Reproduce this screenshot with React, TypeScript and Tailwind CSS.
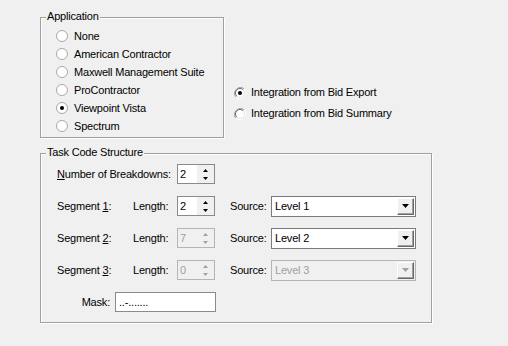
import { FC, ReactNode } from "react";

const Radio: FC<{ checked?: boolean; classic?: boolean }> = ({ checked, classic }) => (
    <svg width="12" height="12" viewBox="0 0 12 12" className="shrink-0">
        {classic ? (
            <>
                <path d="M10.2 1.8 A6 6 0 0 0 1.8 10.2" fill="none" stroke="#a0a0a0" strokeWidth="1" />
                <path d="M1.8 10.2 A6 6 0 0 0 10.2 1.8" fill="none" stroke="#ffffff" strokeWidth="1" />
                <circle cx="6" cy="6" r="4.5" fill="#fff" />
                <path d="M9.2 2.8 A4.5 4.5 0 0 0 2.8 9.2" fill="none" stroke="#696969" strokeWidth="1" />
                <path d="M2.8 9.2 A4.5 4.5 0 0 0 9.2 2.8" fill="none" stroke="#e3e3e3" strokeWidth="1" />
            </>
        ) : (
            <circle cx="6" cy="6" r="5.5" fill="#fff" stroke="#a8a8a8" strokeWidth="1" />
        )}
        {checked && <circle cx="6" cy="6" r="2" fill="#000" />}
    </svg>
);

const GroupBox: FC<{ title: string; className: string; children: ReactNode }> = ({
    title,
    className,
    children,
}) => (
    <div
        className={`relative border border-[#a0a0a0] shadow-[inset_1px_1px_0_#fff,1px_1px_0_#fff] ${className}`}
    >
        <span className="absolute left-[5px] top-[-8px] bg-[#f0f0f0] px-px leading-[13px]">{title}</span>
        {children}
    </div>
);

const Spinner: FC<{ value: string; disabled?: boolean }> = ({ value, disabled }) => (
    <div
        className={`flex h-[20px] w-[38px] border ${
            disabled ? "border-[#b5b5b5] bg-[#f0f0f0] text-[#a0a0a0]" : "border-[#8a8a8a] bg-white text-black"
        }`}
    >
        <span className="flex-1 pl-[2px] leading-[18px]">{value}</span>
        <div className="flex w-[17px] flex-col items-center justify-center gap-[5px] bg-[#f0f0f0]">
            <svg width="5" height="3" viewBox="0 0 5 3">
                <path d="M2.5 0 L5 3 L0 3 Z" fill={disabled ? "#a0a0a0" : "#000"} />
            </svg>
            <svg width="5" height="3" viewBox="0 0 5 3">
                <path d="M0 0 L5 0 L2.5 3 Z" fill={disabled ? "#a0a0a0" : "#000"} />
            </svg>
        </div>
    </div>
);

const Combo: FC<{ value: string; disabled?: boolean }> = ({ value, disabled }) => (
    <div
        className={`flex h-[21px] w-[145px] border p-px ${
            disabled ? "border-[#b5b5b5] bg-[#f0f0f0] text-[#a0a0a0]" : "border-[#7a7a7a] bg-white text-black"
        }`}
    >
        <span className="flex-1 pl-[2px] leading-[17px]">{value}</span>
        <div className="flex w-[17px] items-center justify-center border border-t-white border-l-white border-r-[#696969] border-b-[#696969] bg-[#f0f0f0] shadow-[inset_-1px_-1px_0_#a0a0a0]">
            <svg width="7" height="4" viewBox="0 0 7 4">
                <path d="M0 0 L7 0 L3.5 4 Z" fill={disabled ? "#a0a0a0" : "#000"} />
            </svg>
        </div>
    </div>
);

const SegmentRow: FC<{
    n: string;
    length: string;
    source: string;
    lengthOff?: boolean;
    sourceOff?: boolean;
}> = ({ n, length, source, lengthOff, sourceOff }) => (
    <div className="flex h-[20px] items-center text-black">
        <span className="w-[76px]">
            Segment <span className="underline underline-offset-1">{n}</span>:
        </span>
        <span className="w-[44px]">Length:</span>
        <Spinner value={length} disabled={lengthOff} />
        <span className="ml-[15px] w-[41px]">Source:</span>
        <Combo value={source} disabled={sourceOff} />
    </div>
);

const apps = [
    "None",
    "American Contractor",
    "Maxwell Management Suite",
    "ProContractor",
    "Viewpoint Vista",
    "Spectrum",
];

export default function App() {
    return (
        <div className="h-[346px] w-[508px] bg-[#f0f0f0] pl-[40px] pt-[17px] font-['Liberation_Sans',Arial,sans-serif] text-[11px] tracking-[-0.2px] text-black">
            <div className="flex items-start">
                <GroupBox title="Application" className="h-[121px] w-[184px] pl-[15px] pt-[9px]">
                    {apps.map((a) => (
                        <div key={a} className="flex h-[18px] items-center gap-[6px]">
                            <Radio checked={a === "Viewpoint Vista"} />
                            <span>{a}</span>
                        </div>
                    ))}
                </GroupBox>
                <div className="ml-[10px] mt-[65px] flex flex-col">
                    <div className="flex h-[21px] items-center gap-[5px]">
                        <Radio classic checked />
                        <span>Integration from Bid Export</span>
                    </div>
                    <div className="flex h-[21px] items-center gap-[5px]">
                        <Radio classic />
                        <span>Integration from Bid Summary</span>
                    </div>
                </div>
            </div>

            <GroupBox title="Task Code Structure" className="mt-[15px] h-[170px] w-[392px] pl-[16px] pt-[10px]">
                <div className="flex flex-col gap-[12px]">
                    <div className="flex h-[20px] items-center">
                        <span className="w-[120px]">
                            <span className="underline underline-offset-1">N</span>umber of Breakdowns:
                        </span>
                        <Spinner value="2" />
                    </div>
                    <SegmentRow n="1" length="2" source="Level 1" />
                    <SegmentRow n="2" length="7" source="Level 2" lengthOff />
                    <SegmentRow n="3" length="0" source="Level 3" lengthOff sourceOff />
                    <div className="flex h-[20px] items-center">
                        <span className="w-[58px] pr-[5px] text-right">Mask:</span>
                        <div className="h-[20px] w-[101px] border border-[#8a8a8a] bg-white pl-[3px] leading-[18px]">
                            ..-.......
                        </div>
                    </div>
                </div>
            </GroupBox>
        </div>
    );
}
